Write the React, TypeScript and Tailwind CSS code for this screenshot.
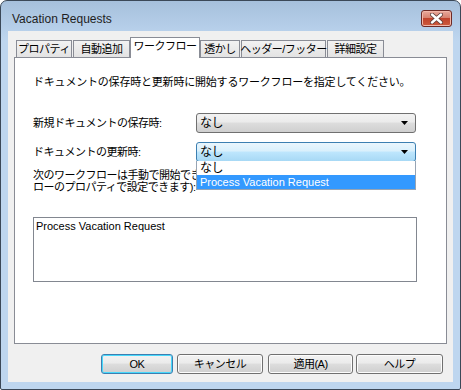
import React from 'react';

const JP = '"Liberation Sans", "Noto Sans CJK JP", sans-serif';

const TABS = [
  { label: 'プロパティ', w: 'w-[56px]', ml: 'ml-0' },
  { label: '自動追加', w: 'w-[57px]', ml: 'ml-[1px]' },
  { label: 'ワークフロー', w: 'w-[70px]', ml: 'ml-0', active: true },
  { label: '透かし', w: 'w-[40px]', ml: 'ml-0' },
  { label: 'ヘッダー/フッター', w: 'w-[85px]', ml: 'ml-[1px]' },
  { label: '詳細設定', w: 'w-[57px]', ml: 'ml-[1px]' },
];

function Arrow() {
  return (
    <svg width="8" height="5" viewBox="0 0 8 5" className="shrink-0">
      <path d="M0 0 H7 L3.5 4 Z" fill="#000" />
    </svg>
  );
}

function Combo({ focused, children }: { focused?: boolean; children?: React.ReactNode }) {
  const skin = focused
    ? 'border-[#3c7fb1] bg-[linear-gradient(#eaf6fd_0%,#d9f0fc_45%,#bee6fd_50%,#a7d9f5_100%)]'
    : 'border-[#707070] bg-[linear-gradient(#f2f2f2_0%,#ebebeb_45%,#dddddd_50%,#cfcfcf_100%)]';
  return (
    <div className="relative w-[220px]">
      <div className={`h-[20px] rounded-[3px] border ${skin} flex items-center justify-between pl-[3px] pr-[6px] text-[12px] tracking-[-0.5px]`}>
        <span>なし</span>
        <Arrow />
      </div>
      {children}
    </div>
  );
}

function Button({ label, w, primary }: { label: string; w: string; primary?: boolean }) {
  const skin = primary
    ? 'border-[#3c7fb1] shadow-[inset_0_0_0_1px_#48d8fb]'
    : 'border-[#707070] shadow-[inset_0_0_0_1px_#fcfcfc]';
  return (
    <div className={`${w} h-[20px] rounded-[3px] border ${skin} bg-[linear-gradient(#f2f2f2_0%,#ebebeb_45%,#dddddd_50%,#cfcfcf_100%)] flex items-center justify-center text-[11px] tracking-[-0.5px]`}>
      {label}
    </div>
  );
}

export default function App() {
  return (
    <div className="w-[461px] h-[390px] bg-white" style={{ fontFamily: JP }}>
      <div className="w-[461px] h-[390px] rounded-t-[7px] rounded-b-[2px] border border-[#3b4858] bg-[linear-gradient(#a6c0dc_0px,#b4cde8_24px,#bed6ef_40px,#bed6ef_100%)] flex flex-col px-[7px] pb-[7px] text-black">
        {/* Title bar */}
        <div className="h-[30px] flex items-start justify-between">
          <span className="pl-[4px] pt-[10px] text-[12px] leading-[16px] text-[#1e1e1e]">Vacation Requests</span>
          <div className="mt-[9px] mr-[1px] w-[31px] h-[17px] rounded-[3px] border border-[#6d2a26] bg-[linear-gradient(#e9a99c_0%,#d7826f_45%,#c0432c_50%,#cd5b3e_100%)] shadow-[inset_0_0_0_1px_#f1b7a9] flex items-center justify-center">
            <svg width="13" height="11" viewBox="0 0 13 11">
              <path d="M2 1.5 L11 9.5 M11 1.5 L2 9.5" stroke="#5a3a36" strokeWidth="4" strokeLinecap="round" />
              <path d="M2 1.5 L11 9.5 M11 1.5 L2 9.5" stroke="#ffffff" strokeWidth="2.4" strokeLinecap="round" />
            </svg>
          </div>
        </div>

        {/* Client area */}
        <div className="h-[351px] bg-[#f0f0f0] flex flex-col px-[6px] text-[11px]">
          {/* Tabs */}
          <div className="h-[26px] flex items-end pl-[2px] relative z-10">
            {TABS.map(t => (
              <div
                key={t.label}
                className={`${t.w} ${t.ml} border border-b-0 border-[#898c95] flex justify-center tracking-[-0.5px] ${
                  t.active
                    ? 'h-[21px] bg-white mb-[-1px] pt-[1px]'
                    : 'h-[17px] bg-[linear-gradient(#f2f2f2,#e3e3e3)] pt-[1px]'
                }`}
              >
                <span className="leading-[14px] whitespace-nowrap">{t.label}</span>
              </div>
            ))}
          </div>

          {/* Panel */}
          <div className="h-[287px] bg-white border border-[#898c95] flex flex-col pl-[18px] pt-[17px] leading-[14px] tracking-[-0.5px]">
            <p className="h-[14px] tracking-[-0.2px]">ドキュメントの保存時と更新時に開始するワークフローを指定してください。</p>

            <div className="mt-[24px] flex items-center">
              <span className="w-[163px]">新規ドキュメントの保存時:</span>
              <Combo />
            </div>

            <div className="mt-[9px] flex items-center relative z-10">
              <span className="w-[163px]">ドキュメントの更新時:</span>
              <Combo focused>
                <div className="absolute left-0 top-[19px] w-[220px] bg-white border border-[#97a4b4] border-t-0 flex flex-col">
                  <div className="h-[14px] pl-[3px] leading-[14px] text-[12px]">なし</div>
                  <div
                    className="h-[14px] pl-[3px] leading-[14px] bg-[#3399ff] text-white tracking-normal"
                    style={{ fontFamily: '"Liberation Sans", sans-serif' }}
                  >
                    Process Vacation Request
                  </div>
                </div>
              </Combo>
            </div>

            <div className="mt-[7px] leading-[12px] whitespace-nowrap">
              <p>次のワークフローは手動で開始できます (手動開始の設定はワークフ</p>
              <p>ローのプロパティで設定できます):</p>
            </div>

            <div
              className="mt-[24px] w-[384px] h-[65px] border border-[#828790] pl-[2px] pt-[1px] tracking-normal"
              style={{ fontFamily: '"Liberation Sans", sans-serif' }}
            >
              Process Vacation Request
            </div>
          </div>

          {/* Buttons */}
          <div className="mt-[10px] flex justify-end pr-[4px]">
            <Button label="OK" w="w-[72px]" primary />
            <div className="w-[4px]" />
            <Button label="キャンセル" w="w-[86px]" />
            <div className="w-[5px]" />
            <Button label="適用(A)" w="w-[85px]" />
            <div className="w-[3px]" />
            <Button label="ヘルプ" w="w-[87px]" />
          </div>
        </div>
      </div>
    </div>
  );
}
